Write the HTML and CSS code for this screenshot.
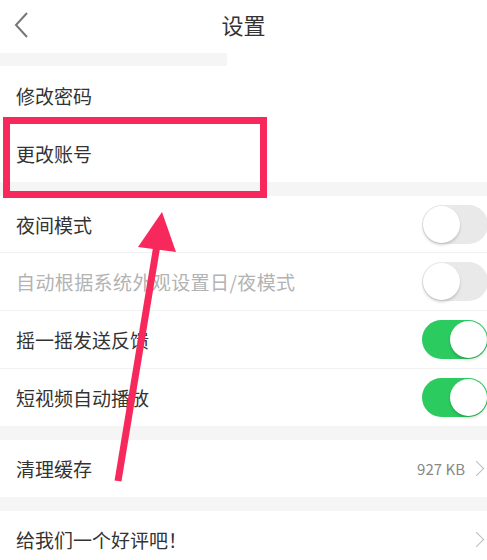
FILE: index.html
```html
<!DOCTYPE html>
<html lang="zh-CN">
<head>
  <meta charset="UTF-8">
  <meta name="viewport" content="width=device-width, initial-scale=1.0">
  <title>设置</title>
  <link rel="stylesheet" href="styles.css">
</head>
<body>
<div class="page">
  <header class="top-bar">
    <svg class="back" width="16" height="26" viewBox="0 0 16 26">
      <polyline points="13,1 2,13 13,25" fill="none" stroke="#777" stroke-width="2"/>
    </svg>
    <h1 class="title">设置</h1>
  </header>
  <div class="gap gap-short"></div>

  <div class="row row-tall">修改密码</div>
  <div class="row">更改账号</div>

  <div class="gap"></div>

  <div class="row line">
    <span>夜间模式</span>
    <span class="switch"></span>
  </div>
  <div class="row line row-wide muted">
    <span>自动根据系统外观设置日/夜模式</span>
    <span class="switch"></span>
  </div>
  <div class="row line row-wide">
    <span>摇一摇发送反馈</span>
    <span class="switch on"></span>
  </div>
  <div class="row">
    <span>短视频自动播放</span>
    <span class="switch on"></span>
  </div>

  <div class="gap"></div>

  <div class="row">
    <span>清理缓存</span>
    <span class="extra">927 KB <i class="chev"></i></span>
  </div>

  <div class="gap"></div>

  <div class="row">
    <span>给我们一个好评吧！</span>
    <span class="extra"><i class="chev"></i></span>
  </div>

  <!-- annotation drawn over the screenshot -->
  <div class="mark-box"></div>
  <svg class="mark-arrow" width="487" height="560" viewBox="0 0 487 560">
    <line x1="118" y1="481" x2="157" y2="245" stroke="#f7285b" stroke-width="7"/>
    <polygon points="162,212 138,247 176,252" fill="#f7285b"/>
  </svg>
</div>
</body>
</html>
```

FILE: styles.css
```css
* {
  margin: 0;
  padding: 0;
  box-sizing: border-box;
}

body {
  width: 487px;
  height: 560px;
  overflow: hidden;
  background: #fff;
  font-family: "Noto Sans CJK SC", "Noto Sans", sans-serif;
  color: #333;
}

.page {
  position: relative;
}

.top-bar {
  height: 53px;
  display: flex;
  align-items: flex-start;
  justify-content: center;
  padding-top: 8px;
  position: relative;
}

.back {
  position: absolute;
  left: 14px;
  top: 12px;
}

.title {
  font-size: 22px;
  font-weight: normal;
  line-height: 32px;
  color: #333;
}

.gap {
  height: 14px;
  background: #f5f5f5;
}

.gap-short {
  height: 13px;
  width: 227px;
}

.row {
  height: 57px;
  padding: 0 0 0 16px;
  display: flex;
  align-items: center;
  justify-content: space-between;
  font-size: 19px;
  background: #fff;
}

.row-tall {
  height: 59px;
}

.row-wide {
  height: 58px;
}

.line {
  border-bottom: 1px solid #f1f1f1;
}

.muted {
  color: #b3b3b3;
  letter-spacing: 0.4px;
}

.switch {
  width: 66px;
  height: 39px;
  border-radius: 20px;
  background: #e9e9e9;
  position: relative;
  margin-right: -1px;
  flex-shrink: 0;
}

.switch::after {
  content: "";
  position: absolute;
  left: 1px;
  top: 1px;
  width: 37px;
  height: 37px;
  border-radius: 50%;
  background: #fff;
  box-shadow: 0 2px 3px rgba(0, 0, 0, 0.18);
}

.switch.on {
  background: #2ccb60;
}

.switch.on::after {
  left: 28px;
}

.extra {
  display: flex;
  align-items: center;
  font-size: 15px;
  color: #888;
  padding-right: 5px;
}

.chev {
  display: inline-block;
  width: 11px;
  height: 11px;
  border-top: 1.5px solid #bbb;
  border-right: 1.5px solid #bbb;
  transform: rotate(45deg);
  margin-left: 6px;
}

.mark-box {
  position: absolute;
  left: 3px;
  top: 117px;
  width: 264px;
  height: 81px;
  border: 7px solid #f7285b;
}

.mark-arrow {
  position: absolute;
  left: 0;
  top: 0;
}
```
